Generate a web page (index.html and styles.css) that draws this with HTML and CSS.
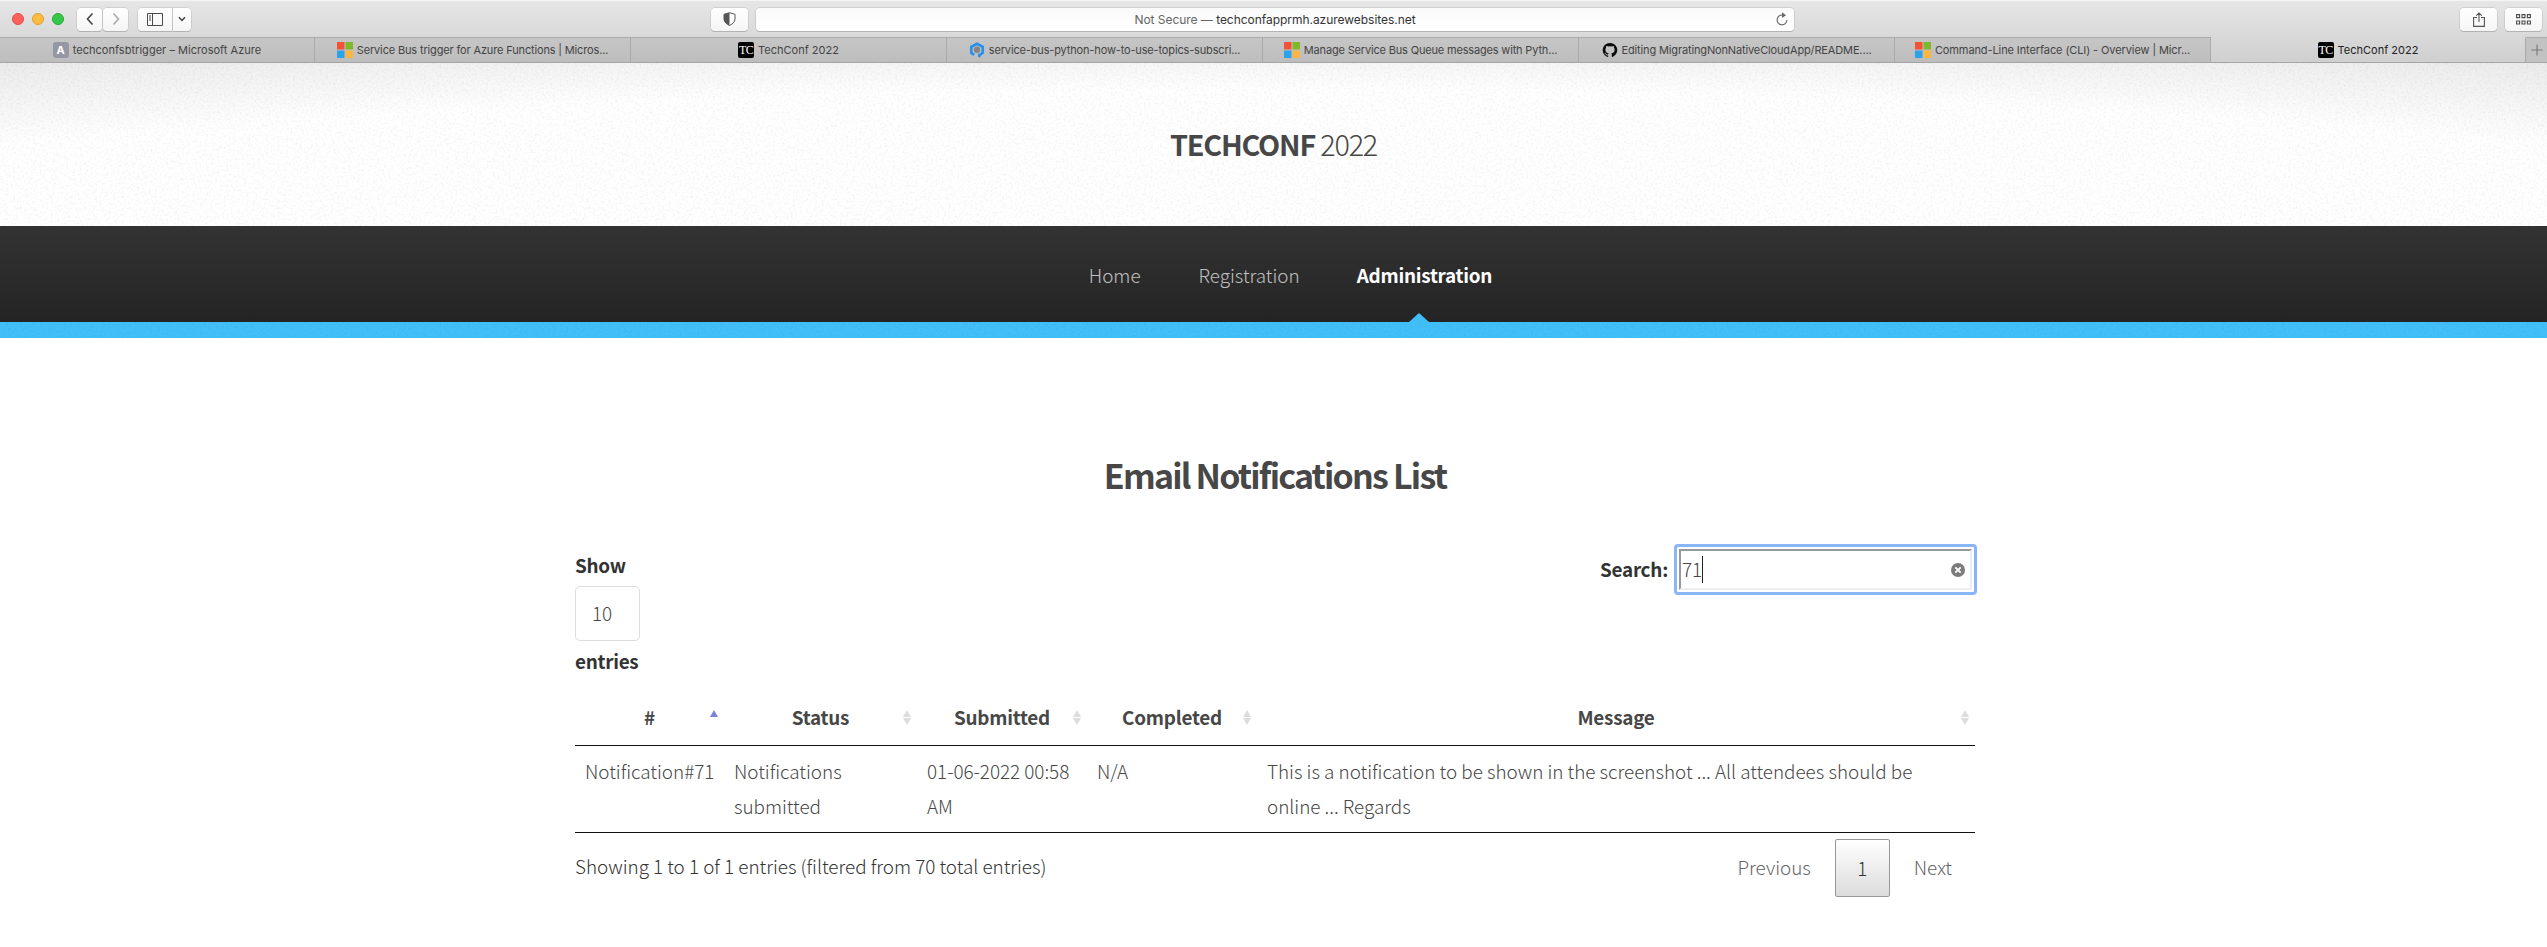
FILE: index.html
```html
<!DOCTYPE html>
<html lang="en">
<head>
<meta charset="utf-8">
<title>TechConf 2022</title>
<link rel="stylesheet" href="styles.css">
</head>
<body>
<svg class="defs" width="0" height="0" aria-hidden="true">
  <defs>
    <filter id="grain" x="0" y="0" width="100%" height="100%">
      <feTurbulence type="fractalNoise" baseFrequency="0.45" numOctaves="2" seed="4"/>
      <feColorMatrix values="0 0 0 0 0  0 0 0 0 0  0 0 0 0 0  0.9 0 0 0 -0.38"/>
    </filter>
    <symbol id="ms" viewBox="0 0 16 16">
      <path fill="#f25237" d="M0 0h7.5v7.5H0z"/><path fill="#80b82c" d="M8.5 0H16v7.5H8.5z"/>
      <path fill="#2aa3ea" d="M0 8.5h7.5V16H0z"/><path fill="#fcb540" d="M8.5 8.5H16V16H8.5z"/>
    </symbol>
  </defs>
</svg>

<div class="browser">
  <div class="toolbar">
    <div class="lights"><i class="red"></i><i class="amber"></i><i class="green"></i></div>
    <div class="group nav-group">
      <span class="btn back"><svg width="10" height="14" viewBox="0 0 10 14"><path d="M7.5 1.5 2.5 7l5 5.500" fill="none" stroke="#444" stroke-width="1.600"/></svg></span>
      <span class="btn forward"><svg width="10" height="14" viewBox="0 0 10 14"><path d="M2.500 1.500 7.500 7l-5 5.500" fill="none" stroke="#aaa" stroke-width="1.600"/></svg></span>
    </div>
    <div class="group side-group">
      <span class="btn side"><svg width="16" height="13" viewBox="0 0 16 13"><path d="M.5.5h15v12H.5zM5.500.5v12M2 3h2M2 5h2M2 7h2" fill="none" stroke="#4b4b4b"/></svg></span>
      <span class="btn chev"><svg width="8" height="6" viewBox="0 0 8 6"><path d="M1 1.200 4 4.500l3-3.300" fill="none" stroke="#444" stroke-width="1.500"/></svg></span>
    </div>
    <span class="btn shield"><svg width="13" height="14" viewBox="0 0 13 14"><path d="M6.500.7 12 2.300V7c0 3-2.600 5.200-5.500 6.400C3.600 12.200 1 10 1 7V2.300z" fill="#fff" stroke="#555"/><path d="M6.500.7v12.700C3.600 12.200 1 10 1 7V2.300z" fill="#555"/></svg></span>
    <div class="address">
      <span class="url"><span class="muted">Not Secure —</span> techconfapprmh.azurewebsites.net</span>
      <svg class="reload" width="12" height="14" viewBox="0 0 12 14"><path d="M7.300 3.200A4.900 4.900 0 1 0 10.900 8" fill="none" stroke="#666" stroke-width="1.100"/><path d="M6 .3 10 3.200 6 6z" fill="#666"/></svg>
    </div>
    <span class="btn share"><svg width="12" height="15" viewBox="0 0 12 15"><path d="M4 5.500H.6v8.900h10.800V5.500H8M6 10V1M3.300 3.700 6 1l2.700 2.700" fill="none" stroke="#555" stroke-width="1.100"/></svg></span>
    <span class="btn grid"><svg width="15" height="11" viewBox="0 0 15 11"><path d="M.6.6h3v3h-3zM6 .6h3v3H6zM11.400.6h3v3h-3zM.6 7h3v3h-3zM6 7h3v3H6zM11.400 7h3v3h-3z" fill="none" stroke="#4b4b4b" stroke-width="1.100"/></svg></span>
  </div>
  <div class="tabs">
    <div class="tab first"><span class="fav azure">A</span><span class="t1">techconfsbtrigger – Microsoft Azure</span></div>
    <div class="tab"><svg class="fav" viewBox="0 0 16 16"><use href="#ms"/></svg><span class="t2">Service Bus trigger for Azure Functions | Micros...</span></div>
    <div class="tab"><span class="fav tc">TC</span><span class="t3">TechConf 2022</span></div>
    <div class="tab"><svg class="fav" viewBox="0 0 16 16"><path d="M5.200 13 2.300 10.800V4.900L8 1.700l5.700 3.200v5.900L11.500 12.500" fill="none" stroke="#2b90ea" stroke-width="2.700"/><path d="M9 11.500l4 .3-2 3.600-2-.5z" fill="#2b90ea"/><circle cx="8" cy="7.800" r="3.200" fill="#858585"/></svg><span class="t4">service-bus-python-how-to-use-topics-subscri...</span></div>
    <div class="tab"><svg class="fav" viewBox="0 0 16 16"><use href="#ms"/></svg><span class="t5">Manage Service Bus Queue messages with Pyth...</span></div>
    <div class="tab"><svg class="fav" viewBox="0 0 16 16"><path fill="#0b0b0b" d="M8 1C3.900 1 .7 4.200.7 8.200c0 3.200 2.100 5.900 5 6.900.4.100.5-.2.5-.4v-1.300c-2 .4-2.500-.9-2.500-.9-.3-.8-.8-1.100-.8-1.100-.7-.4 0-.4 0-.4.7 0 1.100.7 1.100.7.700 1.100 1.700.8 2.200.6.1-.5.3-.8.500-1-1.600-.2-3.300-.8-3.300-3.600 0-.8.3-1.400.7-1.900-.1-.2-.3-.9.100-1.900 0 0 .6-.2 2 .7a7 7 0 0 1 3.600 0c1.400-.9 2-.7 2-.7.4 1 .1 1.700.1 1.900.5.500.7 1.100.7 1.900 0 2.800-1.700 3.400-3.300 3.600.3.200.5.700.5 1.300v2c0 .2.100.5.500.4 2.900-1 5-3.700 5-6.900C15.300 4.200 12.100 1 8 1z"/></svg><span class="t6">Editing MigratingNonNativeCloudApp/README....</span></div>
    <div class="tab"><svg class="fav" viewBox="0 0 16 16"><use href="#ms"/></svg><span class="t7">Command-Line Interface (CLI) - Overview | Micr...</span></div>
    <div class="tab active"><span class="fav tc">TC</span><span class="t3">TechConf 2022</span></div>
    <div class="newtab"><svg width="12" height="12" viewBox="0 0 12 12"><path d="M6 .5v11M.5 6h11" stroke="#777" stroke-width="1.100"/></svg></div>
  </div>
</div>

<header class="site-header">
  <svg class="grain" width="100%" height="100%"><rect width="100%" height="100%" filter="url(#grain)"/></svg>
  <h1 class="logo"><strong>TECHCONF</strong> <span>2022</span></h1>
</header>
<nav class="site-nav">
  <a class="home">Home</a>
  <a class="registration">Registration</a>
  <a class="current">Administration</a>
</nav>
<div class="stripe"><svg class="grain" width="100%" height="100%"><rect width="100%" height="100%" filter="url(#grain)"/></svg></div>

<main class="content">
  <h2 class="title">Email Notifications List</h2>
  <div class="controls">
    <div class="length">
      <span class="label">Show</span>
      <span class="select">10</span>
      <span class="label entries">entries</span>
    </div>
    <div class="filter">
      <span class="label">Search:</span>
      <div class="search"><div class="field"><span class="value">71</span><i class="caret"></i>
        <svg class="clear" width="14" height="14" viewBox="0 0 14 14"><circle cx="7" cy="7" r="7" fill="#7b7b7b"/><path d="m4.300 4.300 5.400 5.400m0-5.400L4.300 9.700" stroke="#fff" stroke-width="1.800"/></svg>
      </div></div>
    </div>
  </div>
  <table class="list">
    <colgroup><col class="c1"><col class="c2"><col class="c3"><col class="c4"><col class="c5"></colgroup>
    <thead>
      <tr>
        <th class="asc">#</th>
        <th>Status</th>
        <th>Submitted</th>
        <th>Completed</th>
        <th>Message</th>
      </tr>
    </thead>
    <tbody>
      <tr>
        <td>Notification#71</td>
        <td>Notifications<br>submitted</td>
        <td>01-06-2022 00:58<br>AM</td>
        <td>N/A</td>
        <td>This is a notification to be shown in the screenshot ... All attendees should be<br>online ... Regards</td>
      </tr>
    </tbody>
  </table>
  <div class="footer">
    <span class="info">Showing 1 to 1 of 1 entries (filtered from 70 total entries)</span>
    <div class="pages"><span class="prev">Previous</span><span class="page">1</span><span class="next">Next</span></div>
  </div>
</main>
</body>
</html>
```
FILE: styles.css
```css
* { box-sizing: border-box; }
body {
  margin: 0;
  background: #fff;
  color: #474747;
  font: 300 18.9px/34.7px "Noto Sans CJK SC", "Noto Sans", sans-serif;
  letter-spacing: -.03px;
  overflow: hidden;
}
h1, h2 { margin: 0; font-weight: 300; }
svg { display: block; flex: none; }
.defs { position: absolute; }

/* Browser chrome */
.browser { height: 63px; font: 400 11px/16px Inter, "Liberation Sans", sans-serif; letter-spacing: 0; color: #444; border-bottom: 1px solid #a5a5a5; background: linear-gradient(#e6e6e6, #cfcfcf 62px); border-top: 1px solid #f5f5f5; }
.toolbar { height: 36px; display: flex; align-items: center; padding: 0 5px 0 12px; }
.lights { display: flex; gap: 8px; margin-right: 13px; }
.lights i { width: 12px; height: 12px; border-radius: 50%; border: 1px solid; }
.lights .red { background: #fc605b; border-color: #e04d48; }
.lights .amber { background: #fdbc40; border-color: #de9f34; }
.lights .green { background: #34c84a; border-color: #27a935; }
.btn { display: flex; align-items: center; justify-content: center; height: 23px; border-radius: 4px; background: linear-gradient(#fff, #f5f5f5); box-shadow: 0 0 0 .5px #bbb, 0 1px 0 #aaa; }
.group { display: flex; gap: 1px; }
.nav-group { margin-right: 10px; }
.back, .forward { width: 25px; }
.side-group { margin-right: 520px; }
.side { width: 34px; border-radius: 4px 0 0 4px; }
.chev { width: 18px; border-radius: 0 4px 4px 0; }
.shield { width: 37px; margin-right: 8px; }
.address { position: relative; width: 1038px; height: 23px; margin-right: auto; display: flex; align-items: center; justify-content: center; border-radius: 4px; background: linear-gradient(#fafafa, #fff); box-shadow: 0 0 0 .5px #bbb, 0 1px 0 #aaa; }
.url { color: #333; font-size: 12px; letter-spacing: -.04px; padding-top: 1px; white-space: nowrap; }
.muted { color: #666; }
.reload { position: absolute; right: 6px; top: 4px; }
.share { width: 37px; margin-right: 8px; }
.grid { width: 37px; }
.tabs { display: flex; height: 25px; }
.tab { width: 316px; display: flex; align-items: center; justify-content: center; gap: 4px; border-top: 1px solid #aaa; border-right: 1px solid #aaa; background: linear-gradient(#c6c6c6, #bdbdbd); white-space: nowrap; }
.tab.first { width: 315px; }
.tab.active { width: 315px; background: none; border-top-color: transparent; color: #222; }
.newtab { flex: 1; display: flex; align-items: center; justify-content: center; border-top: 1px solid #aaa; background: #c2c2c2; }
.t1 { letter-spacing: .03px; }
.t2, .t4 { letter-spacing: -.15px; }
.t5 { letter-spacing: -.17px; }
.t6 { letter-spacing: -.14px; }
.t7 { letter-spacing: -.1px; }
.fav { width: 16px; height: 16px; }
.azure { border-radius: 3px; background: #9598a3; color: #fff; font-weight: 700; text-align: center; }
.tc { border-radius: 2px; background: #000; color: #fff; font: 12px/16px "Liberation Serif", serif; letter-spacing: -.5px; text-align: center; }

/* Site header */
.site-header { position: relative; height: 163px; display: flex; align-items: center; justify-content: center; padding-bottom: 2px; background: radial-gradient(ellipse 1535px 136px at 50% 100%, #fff 100%, #ebebeb 145%); }
.grain { position: absolute; inset: 0; opacity: .11; }
.logo { position: relative; font-size: 28.8px; line-height: 40px; letter-spacing: -1.2px; }
.logo strong { font-weight: 700; }
.site-nav { height: 96px; display: flex; align-items: center; justify-content: center; background: linear-gradient(#333, #242424); color: #c0c0c0; padding: 2px 0 0 34px; }
.home { margin-right: 58px; }
.registration { margin-right: 57px; }
.current { position: relative; color: #fff; font-weight: 700; letter-spacing: -.25px; }
.current::after { content: ""; position: absolute; left: 50%; bottom: -30px; margin-left: -15px; border: 10px solid transparent; border-top: 0; border-bottom: 9px solid #40bdf5; }
.stripe { position: relative; height: 16px; background: #41c0f8; }

/* Notifications list */
.content { width: 1400px; margin: 0 auto 0 575px; padding-top: 112px; }
.title { font-size: 34px; line-height: 50px; font-weight: 700; letter-spacing: -1.8px; text-align: center; }
.controls { display: flex; justify-content: space-between; align-items: flex-start; height: 183px; padding-top: 47px; }
.length { display: flex; flex-direction: column; }
.label { font-weight: 700; color: #333; line-height: 35px; letter-spacing: -.27px; }
.select { width: 65px; height: 55px; margin: 4px 0 2px; padding-left: 16px; line-height: 52px; border: 1px solid #ddd; border-radius: 5px; }
.filter { display: flex; align-items: center; height: 51px; margin: -3px -2px 0 0; gap: 6px; }
.filter .label { padding-bottom: 2px; }
.search { width: 303px; height: 51px; padding: 2px; border: 3px solid #8ab5f9; border-radius: 4px; }
.field { display: flex; align-items: center; height: 100%; border: 2px solid; border-color: #999 #eee #eee #999; padding: 0 5px 0 1px; }
.value { padding-bottom: 1px; }
.caret { width: 1px; height: 27px; background: #222; }
.clear { margin-left: auto; }
.list { width: 1400px; table-layout: fixed; border-collapse: separate; border-spacing: 0; border-bottom: 1px solid #111; }
.c1 { width: 149px; }
.c2 { width: 193px; }
.c3, .c4 { width: 170px; }
.c5 { width: 718px; }
.list th { position: relative; height: 63px; padding: 6px 18px 0; font-weight: 700; letter-spacing: -.25px; border-bottom: 1px solid #111; white-space: nowrap; }
.list th::before, .list th::after { content: ""; position: absolute; right: 6px; border: 4px solid transparent; }
.list th::before { top: 27px; border-top: 0; border-bottom: 7px solid #dcdcdc; }
.list th::after { top: 35px; border-bottom: 0; border-top: 7px solid #dcdcdc; }
.list th.asc::before { border-bottom-color: #7d80dc; }
.list th.asc::after { display: none; }
.list td { height: 86px; padding: 8px 10px; vertical-align: top; white-space: nowrap; }
.footer { display: flex; justify-content: space-between; padding-top: 6px; }
.info { margin-top: 10px; color: #333; }
.pages { display: flex; line-height: 56px; color: #666; }
.prev { margin-right: 24px; }
.page { width: 55px; height: 58px; text-align: center; color: #333; border: 1px solid #979797; border-radius: 2px; background: linear-gradient(#fff, #dcdcdc); }
.next { margin: 0 23px 0 24px; }
```
